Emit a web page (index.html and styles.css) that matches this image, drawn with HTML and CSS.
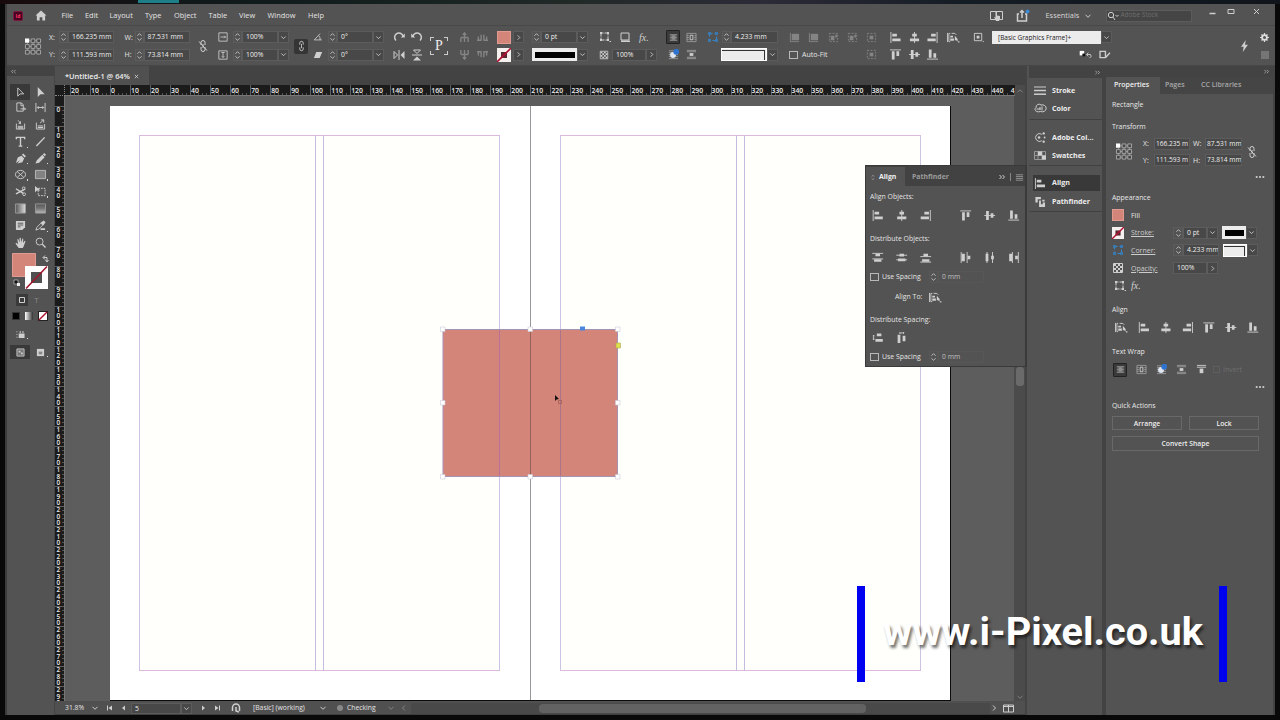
FILE: index.html
```html
<!DOCTYPE html>
<html lang="en">
<head>
<meta charset="utf-8">
<title>Untitled-1</title>
<link rel="stylesheet" href="styles.css">
</head>
<body>
<svg class="defs" width="0" height="0" aria-hidden="true">
  <symbol id="spin" viewBox="0 0 8 12"><path d="M1.500 4.500 4 2l2.500 2.500M1.500 7.500 4 10l2.500-2.500" class="ln"/></symbol>
  <symbol id="down" viewBox="0 0 8 8"><path d="M1.500 2.800 4 5.300l2.500-2.500" class="ln"/></symbol>
  <symbol id="up" viewBox="0 0 8 8"><path d="M1.500 5.300 4 2.800l2.500 2.500" class="ln"/></symbol>
  <symbol id="right" viewBox="0 0 8 8"><path d="M3 1.500 5.500 4 3 6.500" class="ln"/></symbol>
  <symbol id="left" viewBox="0 0 8 8"><path d="M5 1.500 2.500 4 5 6.500" class="ln"/></symbol>
  <symbol id="collapse" viewBox="0 0 8 6"><path d="M3.500 1 1.500 3l2 2M6.500 1l-2 2 2 2" class="ln"/></symbol>
  <symbol id="expand" viewBox="0 0 8 6"><path d="M1.500 1l2 2-2 2M4.500 1l2 2-2 2" class="ln"/></symbol>
  <symbol id="ref" viewBox="0 0 18 18"><path d="M3 3h12v12H3zM9 3v12M3 9h12" class="ln dim"/><g class="hole"><path d="M7 1h4v4H7zM13 1h4v4h-4zM1 7h4v4H1zM7 7h4v4H7zM13 7h4v4h-4zM1 13h4v4H1zM7 13h4v4H7zM13 13h4v4h-4z"/></g><path d="M.5.500H5v4.500H.500z" fill="#fff"/></symbol>
  <symbol id="chain" viewBox="0 0 10 14"><path d="M3 5.500V3.500a2 2 0 0 1 4 0v2M3 8.500v2a2 2 0 0 0 4 0v-2M5 4.500v5" class="ln"/></symbol>
  <symbol id="unchain" viewBox="0 0 10 14"><path d="M3 6V3.500a2 2 0 0 1 4 0V6M3 8v2.500a2 2 0 0 0 4 0V8M1 2.500l8 9M5 5v4" class="ln"/></symbol>
  <symbol id="scx" viewBox="0 0 12 12"><path d="M1 1h10v10H1zM3 6h6M7.500 4.500 9 6 7.500 7.500" class="ln"/></symbol>
  <symbol id="scy" viewBox="0 0 12 12"><path d="M1 1h10v10H1zM6 3v6M4.500 7.500 6 9l1.500-1.500M4 3h4" class="ln"/></symbol>
  <symbol id="angle" viewBox="0 0 12 12"><path d="M8.500 2 1.500 9.500h9M7 4.500q2 2 1.500 5" class="ln"/></symbol>
  <symbol id="shear" viewBox="0 0 12 12"><path d="M4 2.500h7l-3 7H1z" class="fl"/></symbol>
  <symbol id="rotr" viewBox="0 0 12 12"><path d="M3 9.500A4.300 4.300 0 1 1 10 5" class="ln th"/><path d="M11.800 2.500v4h-4z" class="fl"/></symbol>
  <symbol id="rotl" viewBox="0 0 12 12"><path d="M9 9.500A4.300 4.300 0 1 0 2 5" class="ln th"/><path d="M.2 2.500v4h4z" class="fl"/></symbol>
  <symbol id="fliph" viewBox="0 0 12 12"><path d="M6 1v10M1 2.500v7L4.500 6z" class="ln"/><path d="M11.500 2v8L7.500 6z" class="fl"/></symbol>
  <symbol id="flipv" viewBox="0 0 12 12"><path d="M1 6h10M2.500 1h7L6 4.500z" class="ln"/><path d="M2 11.500h8L6 7.500z" class="fl"/></symbol>
  <symbol id="tree" viewBox="0 0 12 12"><path d="M6 1v10M2 6v5M10 6v5M2 6h8M4.300 3 6 1l1.700 2" class="ln th"/></symbol>
  <symbol id="sibs" viewBox="0 0 12 12"><path d="M1.500 5v4M4.500 3v6M7.500 3v6M10.500 5v4M0 9h5M7 9h5" class="ln th"/></symbol>
  <symbol id="none" viewBox="0 0 14 14"><path d="M0 0h14v14H0z" fill="#f4f0ee"/><path d="M4 4h6v6H4z" fill="#5a2a30"/><path d="M0 14 14 0" stroke="#b01030" stroke-width="1.600"/></symbol>
  <symbol id="frame" viewBox="0 0 12 12"><path d="M2 2h7v7H2z" class="ln" stroke-dasharray="2.500 1"/><path d="M1 1h2v2H1zM8 1h2v2H8zM1 8h2v2H1zM8 8h2v2H8zM10.500 10h1.500v1h-1.500z" class="fl"/></symbol>
  <symbol id="shadow" viewBox="0 0 12 12"><path d="M2 2h8v7H2z" class="ln"/><path d="M2 9.500h9v1.500H2z" class="fl"/></symbol>
  <symbol id="checker" viewBox="0 0 12 12"><path d="M1.500 1.500h9v9h-9z" class="ln"/><path d="M2 2h2v2H2zM6 2h2v2H6zM4 4h2v2H4zM8 4h2v2H8zM2 6h2v2H2zM6 6h2v2H6zM4 8h2v2H4zM8 8h2v2H8z" class="fl"/></symbol>
  <symbol id="wrap0" viewBox="0 0 12 12"><path d="M1 2h10M1 4h10M1 6h10M1 8h10M1 10h10" class="ln dim"/><path d="M3.500 3h5v6h-5z" fill="#8c8c8c"/></symbol>
  <symbol id="wrap1" viewBox="0 0 12 12"><path d="M1 1.500h10v9H1z" fill="none" stroke="#989898"/><path d="M1 4h2M9 4h2M1 6h2M9 6h2M1 8h2M9 8h2" class="ln dim"/><path d="M4.500 3.500h3v5h-3z" class="ln"/></symbol>
  <symbol id="wrap2" viewBox="0 0 12 12"><path d="M1 2h10M1 4h10M1 6h10M1 8h10M1 10.500h10" class="ln dim"/><circle cx="5.500" cy="6.500" r="3.200" fill="#dfe6f2"/><circle cx="9" cy="3" r="3.200" fill="#2f73d0"/></symbol>
  <symbol id="wrap3" viewBox="0 0 12 12"><path d="M1 1.500h10M1 10.500h10M1 3h10M1 9h10" class="ln dim"/><path d="M4 4.500h4v3H4z" class="fl"/></symbol>
  <symbol id="wrap4" viewBox="0 0 12 12"><path d="M1 1.500h10M1 3.500h10" class="ln"/><path d="M4 5h4v5H4z" class="fl"/></symbol>
  <symbol id="corner" viewBox="0 0 12 12"><path d="M2.500 2.500h7v7h-7z" fill="none" stroke="#3a86c8" stroke-dasharray="3 2"/><path d="M1 1h3v3H1zM8 1h3v3H8zM1 8h3v3H1zM8 8h3v3H8z" fill="#3a78b0"/></symbol>
  <symbol id="fit1" viewBox="0 0 12 12"><path d="M1.500 1v10M1.500 10.500H11" class="ln"/><path d="M3 2h8v7H3z" class="fl"/></symbol>
  <symbol id="fit2" viewBox="0 0 12 12"><path d="M1.500 1.500h9v9h-9z" class="ln" stroke-dasharray="2 1.500"/><path d="M3 4h4v5H3zM8 3h2v3H8z" class="fl"/></symbol>
  <symbol id="fit3" viewBox="0 0 12 12"><path d="M1.500 1.500h9v9h-9z" class="ln" stroke-dasharray="2 1.500"/><path d="M4 4h4v4H4z" class="fl"/></symbol>
  <symbol id="aL" viewBox="0 0 12 12"><path d="M1 0v12" class="ln"/><path d="M2.500 2h5v3h-5zM2.500 7h9v3h-9z" class="fl"/></symbol>
  <symbol id="aC" viewBox="0 0 12 12"><path d="M6 0v12" class="ln"/><path d="M3.500 2h5v3h-5zM1 7h10v3H1z" class="fl"/></symbol>
  <symbol id="aR" viewBox="0 0 12 12"><path d="M11 0v12" class="ln"/><path d="M4.500 2h5v3h-5zM.5 7h9v3h-9z" class="fl"/></symbol>
  <symbol id="aT" viewBox="0 0 12 12"><path d="M0 1h12" class="ln"/><path d="M2 2.500h3v9H2zM7 2.500h3v5H7z" class="fl"/></symbol>
  <symbol id="aM" viewBox="0 0 12 12"><path d="M0 6h12" class="ln"/><path d="M2 1h3v10H2zM7 3.500h3v5H7z" class="fl"/></symbol>
  <symbol id="aB" viewBox="0 0 12 12"><path d="M0 11h12" class="ln"/><path d="M2 .5h3v9H2zM7 4.500h3v5H7z" class="fl"/></symbol>
  <symbol id="dT" viewBox="0 0 12 12"><path d="M0 1.500h12M0 7.500h12" class="ln"/><path d="M3.500 2h5v2.500h-5zM2 8h8v2.500H2z" class="fl"/></symbol>
  <symbol id="dM" viewBox="0 0 12 12"><path d="M0 3.500h12M0 8.500h12" class="ln"/><path d="M3.500 2h5v3h-5zM2 7h8v3H2z" class="fl"/></symbol>
  <symbol id="dB" viewBox="0 0 12 12"><path d="M0 5h12M0 11h12" class="ln"/><path d="M3.500 2h5v2.500h-5zM2 8h8v2.500H2z" class="fl"/></symbol>
  <symbol id="dL" viewBox="0 0 12 12"><path d="M1 0v12M7.500 0v12" class="ln"/><path d="M1.500 2h3.500v8H1.500zM8 4h3v4H8z" class="fl"/></symbol>
  <symbol id="dC" viewBox="0 0 12 12"><path d="M3 0v12M9 0v12" class="ln"/><path d="M1.500 2h3v8h-3zM7.500 4h3v4h-3z" class="fl"/></symbol>
  <symbol id="dR" viewBox="0 0 12 12"><path d="M4.500 0v12M11 0v12" class="ln"/><path d="M1 2h3.500v8H1zM7.500 4h3v4h-3z" class="fl"/></symbol>
  <symbol id="sV" viewBox="0 0 12 12"><path d="M1.500 3.500v5M.5 4.500l1-1 1 1M.5 7.500l1 1 1-1" class="ln"/><path d="M5 1.500h5v3H5zM3.500 7.500h8v3h-8z" class="fl"/></symbol>
  <symbol id="sH" viewBox="0 0 12 12"><path d="M3.500 1h5M4.500 0l-1 1 1 1M7.500 0l1 1-1 1" class="ln"/><path d="M1.500 3h3v9h-3zM7 4h3v6H7z" class="fl"/></symbol>
  <symbol id="aTo" viewBox="0 0 14 12"><path d="M1 1v10M4 1.500H2.500v9H4M5.500 1.500H9l1.500 1.500" class="ln"/><path d="M4 4h3v2H4zM4 7h4v2.500H4zM9 4l3 3.500v3L10.500 9H9zM12.500 10H14v1.500h-1.500z" class="fl"/></symbol>
  <symbol id="dots" viewBox="0 0 12 4"><circle cx="2" cy="2" r="1.300" class="fl"/><circle cx="6" cy="2" r="1.300" class="fl"/><circle cx="10" cy="2" r="1.300" class="fl"/></symbol>
  <symbol id="menu" viewBox="0 0 10 10"><path d="M1 2h8M1 4h8M1 6h8M1 8h8" class="ln dim"/></symbol>
</svg>

<div class="backdrop"><i class="teal"></i></div>
<div class="app">
  <header class="menubar">
    <span class="logo">Id</span>
    <svg class="home" viewBox="0 0 12 12"><path d="M6 .5 0 6h1.500v5.500h3V8h3v3.500h3V6H12z" class="fl"/></svg>
    <nav class="menus"><span>File</span><span>Edit</span><span>Layout</span><span>Type</span><span>Object</span><span>Table</span><span>View</span><span>Window</span><span>Help</span></nav>
    <svg class="touch" viewBox="0 0 13 11"><path d="M.5 1.500h12v8H.500z" class="ln"/><path d="M5.500 2 7 1.500v4l3 .5v3l-1 2H6L4 7l1.500.5z" class="fl"/></svg>
    <svg class="share" viewBox="0 0 14 13"><path d="M3 5H1.500v7h9V5H9M6 9V2M4 3.500l2-2 2 2" class="ln th"/><circle cx="11.500" cy="2.500" r="2" fill="#3a8ad8"/></svg>
    <span class="workspace">Essentials</span>
    <svg class="i8"><use href="#down"/></svg>
    <span class="search"><svg viewBox="0 0 12 10"><circle cx="4" cy="4" r="2.700" class="ln"/><path d="M6 6l2 3M8.500 4l1.500 1.500L11.500 4" class="ln"/></svg>Adobe Stock</span>
    <svg class="win" viewBox="0 0 52 10"><path d="M.5 6.500h6" class="ln th"/><path d="M19 2.500h6v4h-6zM45 2l5 5M50 2l-5 5" class="ln"/></svg>
  </header>

  <section class="control">
    <div class="g c01"><svg class="ref"><use href="#ref"/></svg></div>
    <div class="g rows lab"><div><b>X:</b><i class="sp"><svg><use href="#spin"/></svg></i><em class="f">166.235 mm</em></div><div><b>Y:</b><i class="sp"><svg><use href="#spin"/></svg></i><em class="f">111.593 mm</em></div></div>
    <div class="g rows lab"><div><b>W:</b><i class="sp"><svg><use href="#spin"/></svg></i><em class="f">87.531 mm</em></div><div><b>H:</b><i class="sp"><svg><use href="#spin"/></svg></i><em class="f">73.814 mm</em></div></div>
    <div class="g"><svg class="chain"><use href="#unchain"/></svg></div>
    <div class="g rows num"><div><svg class="i10"><use href="#scx"/></svg><i class="sp"><svg><use href="#spin"/></svg></i><em class="f">100%</em><i class="ch"><svg><use href="#down"/></svg></i></div><div><svg class="i10"><use href="#scy"/></svg><i class="sp"><svg><use href="#spin"/></svg></i><em class="f">100%</em><i class="ch"><svg><use href="#down"/></svg></i></div></div>
    <div class="g"><span class="linked"><svg><use href="#chain"/></svg></span></div>
    <div class="g rows num"><div><svg class="i10"><use href="#angle"/></svg><i class="sp"><svg><use href="#spin"/></svg></i><em class="f">0°</em><i class="ch"><svg><use href="#down"/></svg></i></div><div><svg class="i10"><use href="#shear"/></svg><i class="sp"><svg><use href="#spin"/></svg></i><em class="f">0°</em><i class="ch"><svg><use href="#down"/></svg></i></div></div>
    <div class="g rows gap6"><div><svg class="i12"><use href="#rotr"/></svg><svg class="i12"><use href="#rotl"/></svg></div><div><svg class="i12"><use href="#fliph"/></svg><svg class="i12"><use href="#flipv"/></svg></div></div>
    <div class="g"><span class="pbox">P</span></div>
    <div class="g rows gap7 faded"><div><svg class="i11"><use href="#tree"/></svg><svg class="i11"><use href="#sibs"/></svg></div><div><svg class="i11 flip"><use href="#tree"/></svg><svg class="i11 flip"><use href="#sibs"/></svg></div></div>
    <div class="g rows sw"><div><i class="swatch"></i><i class="ch"><svg><use href="#right"/></svg></i></div><div><svg class="i14"><use href="#none"/></svg><i class="ch"><svg><use href="#right"/></svg></i></div></div>
    <div class="g rows"><div><i class="sp"><svg><use href="#spin"/></svg></i><em class="f w35">0 pt</em><i class="ch"><svg><use href="#down"/></svg></i></div><div><i class="strokebox"></i><i class="ch"><svg><use href="#down"/></svg></i></div></div>
    <div class="g rows fxg"><div><svg class="i12"><use href="#frame"/></svg><svg class="i12"><use href="#shadow"/></svg><span class="fx">fx.</span></div><div class="op"><svg class="i10"><use href="#checker"/></svg><em class="f w34">100%</em><i class="ch"><svg><use href="#right"/></svg></i></div></div>
    <div class="g rows gap6"><div><i class="on"><svg><use href="#wrap0"/></svg></i><svg class="i11"><use href="#wrap1"/></svg></div><div><i class="off"><svg><use href="#wrap2"/></svg></i><svg class="i11"><use href="#wrap3"/></svg></div></div>
    <div class="g rows crn"><div><svg class="i12"><use href="#corner"/></svg><i class="sp"><svg><use href="#spin"/></svg></i><em class="f w46">4.233 mm</em></div><div class="r2"><i class="cornerbox"></i><i class="ch"><svg><use href="#down"/></svg></i></div></div>
    <div class="g rows fit"><div class="faded five"><svg class="i11"><use href="#fit1"/></svg><svg class="i11"><use href="#fit1"/></svg><svg class="i11"><use href="#fit2"/></svg><svg class="i11"><use href="#fit2"/></svg><svg class="i11"><use href="#fit3"/></svg></div><div><i class="cb"></i><span class="af">Auto-Fit</span><svg class="i11 faded"><use href="#fit3"/></svg></div></div>
    <div class="g rows al"><div><svg class="i11"><use href="#aL"/></svg><svg class="i11"><use href="#aC"/></svg><svg class="i11"><use href="#aR"/></svg><svg class="ato"><use href="#aTo"/></svg></div><div><svg class="i11"><use href="#aT"/></svg><svg class="i11"><use href="#aM"/></svg><svg class="i11"><use href="#aB"/></svg></div></div>
    <div class="g rows"><div><svg class="i11" viewBox="0 0 12 12"><path d="M1.500 1.500h8v8h-8z" class="ln"/><path d="M4 4h3v3H4zM10.500 10H12v1h-1.500z" class="fl"/></svg></div><div></div></div>
    <div class="g rows"><div><span class="style">[Basic Graphics Frame]+</span><i class="ch"><svg><use href="#down"/></svg></i></div><div class="undo"><svg viewBox="0 0 14 10"><path d="M0 1h5v5H0z" fill="#fff"/><path d="M3 4h3v3H3z" fill="#111"/><path d="M8 5h4q2 2-1 4M9.500 3 7.500 5l2 2" class="ln"/></svg><svg viewBox="0 0 14 10"><path d="M1.500 1.500h6v7h-6zM8 8l4.500-5" class="ln th"/></svg></div></div>
    <div class="g"><svg class="bolt" viewBox="0 0 10 14"><path d="M6.500 0 1 8h3l-1 6 6-8.500H5.500z" class="fl"/></svg></div>
    <div class="g rows"><div><svg class="i9" viewBox="0 0 12 12"><path d="M6 0v12M0 6h12M2 2l8 8M10 2l-8 8" stroke="#ddd" stroke-width="1.600"/><circle cx="6" cy="6" r="3.200" fill="#535353" stroke="#ddd" stroke-width="2.400"/></svg></div><div><svg class="i10"><use href="#menu"/></svg></div></div>
  </section>

  <main class="work">
    <aside class="toolcol">
      <div class="strip"><svg><use href="#collapse"/></svg></div>
      <div class="tools">
        <i class="sel"><svg viewBox="0 0 12 12"><path d="M3 1v9l2.500-2.500H9.500z" class="ln"/></svg></i><i><svg viewBox="0 0 12 12"><path d="M3 0v11l3-3h4.500z" class="fl"/></svg></i>
        <i><svg viewBox="0 0 12 12"><path d="M2 1h5l2 2v7H2zM6.500 1v3H9M6 7.500h5.500M10 6l1.500 1.500L10 9" class="ln"/></svg></i><i><svg viewBox="0 0 12 12"><path d="M1 1v10M11 1v10M2.500 6h7M4 4.500 2.500 6 4 7.500M8 4.500 9.500 6 8 7.500" class="ln"/></svg></i>
        <i><svg viewBox="0 0 12 12"><path d="M1.500 5v6h9V5M3 8h6M3.500 1.500 6 5M6 2.500V5H4" class="ln"/><path d="M3 9h6v1.500H3z" class="fl"/></svg></i><i><svg viewBox="0 0 12 12"><path d="M1.500 4v7h9V5.500M3 7.500h6M5.500 4.500l4-3.500M6.500 1h3v3" class="ln"/><path d="M3 8.500h6V10H3z" class="fl"/></svg></i>
        <i class="more"><svg viewBox="0 0 12 12"><path d="M1.500 3.500v-2h9v2M6 1.500v9.500M4 11h4" class="ln th"/></svg></i><i><svg viewBox="0 0 12 12"><path d="M1.500 11 10.500 1.500" class="ln th"/></svg></i>
        <i class="more"><svg viewBox="0 0 12 12"><path d="M1 11 3 5l4-2 3 3-2 4-5.500 1.500L5.500 8zM7.500 2l1.500-1.500 3 3L10.500 5z" class="fl"/></svg></i><i class="more"><svg viewBox="0 0 12 12"><path d="M.5 11.500 2 8l6-6 2.500 2.500-6 6zM8.500 1.500 10 0l2 2-1.200 1.500z" class="fl"/></svg></i>
        <i class="more"><svg viewBox="0 0 12 12"><ellipse cx="6" cy="6" rx="5.500" ry="4.500" class="ln"/><path d="M2.500 3l7 6M9.500 3l-7 6" class="ln"/></svg></i><i class="more"><svg viewBox="0 0 12 12"><path d="M.5 1.500h11v9H.500z" fill="#828282" stroke="#bbb"/></svg></i>
        <i><svg viewBox="0 0 12 12"><path d="M1 3l8 5M1 8.500l10-5" class="ln th"/><circle cx="10" cy="9" r="1.500" class="ln"/><circle cx="9.500" cy="2.500" r="1.500" class="ln"/></svg></i><i class="more"><svg viewBox="0 0 12 12"><path d="M3.500 2.500H11v8H3.500z" class="ln" stroke-dasharray="2 1"/><path d="M0 0v7l2-2h4z" class="fl"/></svg></i>
        <i><svg viewBox="0 0 12 12"><path d="M.5 1h11v10H.500z" fill="url(#gh)" stroke="#999"/></svg></i><i><svg viewBox="0 0 12 12"><path d="M.5 1h11v10H.500z" fill="url(#gv)" stroke="#999"/></svg></i>
        <i><svg viewBox="0 0 12 12"><path d="M1 1h10v7l-3 3H1z" class="fl"/><path d="M3 3.500h6M3 5.500h6M3 7.500h3" stroke="#535353"/></svg></i><i class="more"><svg viewBox="0 0 12 12"><path d="M1 11 2 8l4.500-4.500 2 2L4 10z" class="ln"/><path d="M6 3l3 3 2.500-3.500L9.500.5zM6 9h5v2H6z" class="fl"/></svg></i>
        <i><svg viewBox="0 0 12 12"><path d="M4 12 .5 7l1-.8L3.500 8 2.500 2.500l1-.2L5 6 5 .8h1.200L7 6 8 1.500l1 .3L8.800 6.500l1.700-2.500 1 .5L9.500 10 8.500 12z" class="fl"/></svg></i><i><svg viewBox="0 0 12 12"><circle cx="5" cy="5" r="3.800" class="ln"/><path d="M8 8l3.500 3.500" class="ln th"/></svg></i>
      </div>
      <svg class="fillstroke" viewBox="0 0 44 38">
        <defs><linearGradient id="gh"><stop offset="0" stop-color="#555"/><stop offset="1" stop-color="#ddd"/></linearGradient><linearGradient id="gv" x2="0" y2="1"><stop offset="0" stop-color="#555"/><stop offset=".5" stop-color="#777"/><stop offset="1" stop-color="#bbb"/></linearGradient></defs>
        <path d="M4.500 2.500h23v23h-23z" fill="#d4857a" stroke="#df9c92"/>
        <path d="M17 15h23v23H17z" fill="#fff"/><path d="M23 21h11v11H23z" fill="#505050"/><path d="M18 37.500 39 15.500" stroke="#a01830" stroke-width="1.600"/>
        <path d="M35.500 6.500h3.500v4M37 4.500l-2 2 2 2M37.500 9l1.500 2 1.500-2" class="ln"/>
        <path d="M6 29h4v4H6z" fill="#111" stroke="#ddd" stroke-width=".6"/><path d="M9 32h3v3H9z" fill="#eee"/>
      </svg>
      <div class="pair p1"><i class="dark"><svg viewBox="0 0 8 8"><path d="M1.500 1.500h5v5h-5z" class="ln"/></svg></i><i class="tt">T</i></div>
      <div class="trio"><i class="blk"></i><i class="grd"></i><svg viewBox="0 0 10 10"><path d="M0 0h10v10H0z" fill="#222"/><path d="M1 1h8v8H1z" fill="#fff"/><path d="M1 9 9 1" stroke="#b01030" stroke-width="1.400"/></svg></div>
      <div class="pair p2"><i class="more"><svg viewBox="0 0 10 10"><path d="M0 2h2M0 5h2M0 8h2" class="ln dim"/><path d="M3 4h6.500v5H3zM4 1.500h1.500v1.500H4zM7 1.500h1.500v1.500H7z" class="fl"/></svg></i></div>
      <div class="pair p3"><i class="sel"><svg viewBox="0 0 10 10"><path d="M1 1h8v8H1z" fill="#777" stroke="#c4c4c4"/><path d="M3 3h2v2H3zM5.500 5h2v2h-2z" class="fl"/></svg></i><i class="more"><svg viewBox="0 0 10 10"><path d="M1 1h8v8H1z" class="fl"/><path d="M3 4h4v3H3z" fill="#888"/></svg></i></div>
    </aside>

    <section class="doc">
      <div class="tabs"><span class="tab">*Untitled-1 @ 64% <svg viewBox="0 0 6 6"><path d="M1 1l4 4M5 1 1 5" class="ln"/></svg></span></div>
      <div class="hr"><i class="origin"></i><div class="hticks" id="hticks"></div><i class="cap"><svg class="i8 faded"><use href="#up"/></svg></i></div>
      <div class="mid">
        <div class="vticks" id="vticks"></div>
        <div class="canvas">
          <div class="spread">
            <svg viewBox="110 106 841 595" width="841" height="595">
              <path d="M139.500 135.500h360v535h-360zM560.500 135.500h360v535h-360z" fill="#fffffb" stroke="#cdc3e4"/>
              <path d="M139 135.500h361M560 135.500h361M139 670.500h361M560 670.500h361" stroke="#dcb9dc"/>
              <path d="M315.500 135v536M323.500 135v536M736.500 135v536M744.500 135v536" stroke="#c6bbe0"/>
              <path d="M530.500 106v594" stroke="#98989c"/>
              <path d="M443 329.500h174.500v147H443z" fill="#d4857a" stroke="#a593b4"/>
              <path d="M499.500 330v146" stroke="#b8709a"/><path d="M560.500 330v146" stroke="#ac7488"/>
              <path d="M530.500 330v146" stroke="#96605c"/>
              <path d="M110 700.500h841M950.500 106v595" stroke="#0c0c0c"/>
              <g fill="#fff" stroke="#c9c9da" stroke-width=".6"><path d="M440.500 327h4.500v4.500h-4.500zM528 327h4.500v4.500H528zM615.500 327h4.500v4.500h-4.500zM440.500 400.500h4.500v4.500h-4.500zM615.500 400.500h4.500v4.500h-4.500zM440.500 474.500h4.500v4.500h-4.500zM528 474.500h4.500v4.500H528zM615.500 474.500h4.500v4.500h-4.500z"/></g>
              <path d="M580 326.500h5v4h-5z" fill="#4a86dc"/><path d="M616 343h4.500v5H616z" fill="#dfe04c" stroke="#a8a850" stroke-width=".6"/>
              <path d="M555 395v6l1.500-1.500 2.500-.5z" fill="#111"/><path d="M558.500 400.500h3v3h-3z" fill="none" stroke="#a05c54" stroke-width=".8"/>
            </svg>
          </div>
        </div>
        <div class="vscroll"><i></i><svg class="i8 dn faded"><use href="#down"/></svg></div>
      </div>
      <div class="status">
        <span class="zoom">31.8%</span><svg class="i8"><use href="#down"/></svg>
        <svg class="pg" viewBox="0 0 22 8"><path d="M1.500 1.500v5" class="ln"/><path d="M6 1.500v5L2.500 4zM19 1.500v5L16 4z" class="fl"/></svg>
        <em class="f">5</em><i class="ch"><svg><use href="#down"/></svg></i>
        <svg class="pg2" viewBox="0 0 22 8"><path d="M3 1.500v5L6 4zM16 1.500v5L19.500 4z" class="fl"/><path d="M20.500 1.500v5" class="ln"/></svg>
        <svg class="hd" viewBox="0 0 12 10"><path d="M1.500 8V4.500a3.500 3.500 0 0 1 7 0V8M5 4v4l3 1" class="ln th"/></svg>
        <span class="prof">[Basic] (working)</span><svg class="i8"><use href="#down"/></svg>
        <i class="dot"></i><span class="chk">Checking</span><svg class="i8 faded"><use href="#down"/></svg><svg class="i8 faded lf"><use href="#left"/></svg>
        <span class="track"><i></i></span><svg class="i8"><use href="#right"/></svg>
        <svg class="split" viewBox="0 0 11 9"><path d="M.5 1h10v7H.500zM5.500 1v7M.5 2.500h10" class="ln"/></svg>
      </div>
    </section>

    <aside class="dock">
      <div class="strip"><svg><use href="#expand"/></svg></div>
      <div class="dlist">
        <div class="set"><p><svg viewBox="0 0 12 10"><path d="M0 1.500h12" class="ln"/><path d="M0 5h12" class="ln th"/><path d="M0 8.700h12" class="ln th"/></svg>Stroke</p><p><svg viewBox="0 0 12 10"><path d="M2 4a3 3 0 0 1 5-2.500A4 3.500 0 1 1 6.500 8C2 9.500-.5 6 2 4z" class="ln"/><path d="M2.500 5.500h4M8 3v4M6 3.500v3" class="ln"/></svg>Color</p></div>
        <div class="set"><p><svg viewBox="0 0 12 12"><path d="M8 2.500A4.300 4.300 0 1 0 8 9.500" class="ln"/><circle cx="5" cy="6" r="1.400" class="fl"/><circle cx="10" cy="1.500" r="1.300" class="fl"/><circle cx="11" cy="6" r="1" class="fl"/><circle cx="10" cy="10.500" r="1.300" class="fl"/></svg>Adobe Col...</p><p><svg viewBox="0 0 12 10"><path d="M.5 1h11v8H.500zM.5 5h11M4 1v8M8 1v8" class="ln dim"/><path d="M4 1h4v4H4zM8 5h4v4H8z" class="fl"/></svg>Swatches</p></div>
        <div class="set"><p class="act"><svg><use href="#aL"/></svg>Align</p><p><svg viewBox="0 0 12 12"><path d="M1 1h6v2.500H3.500V7H1zM5 5h2v4h2V7h2.500v5H5zM8.500 4H11v2H8.500z" class="fl"/></svg>Pathfinder</p></div>
      </div>
    </aside>

    <aside class="props">
      <div class="strip"><svg><use href="#expand"/></svg></div>
      <div class="ptabs"><span class="cur">Properties</span><span>Pages</span><span>CC Libraries</span></div>
      <div class="pbody">
        <h4 class="h1">Rectangle</h4>
        <h4 class="h2">Transform</h4>
        <div class="xf"><svg class="ref"><use href="#ref"/></svg><div class="xfg"><b>X:</b><em class="f">166.235 m</em><b>W:</b><em class="f">87.531 mm</em><b>Y:</b><em class="f">111.593 m</em><b>H:</b><em class="f">73.814 mm</em></div><svg class="chain"><use href="#unchain"/></svg></div>
        <div class="dotsrow"><svg><use href="#dots"/></svg></div>
        <h4 class="h3">Appearance</h4>
        <div class="ar"><i class="swatch"></i><span>Fill</span></div>
        <div class="ar"><svg class="i12"><use href="#none"/></svg><u>Stroke:</u><i class="sp"><svg><use href="#spin"/></svg></i><em class="f w24">0 pt</em><i class="ch"><svg><use href="#down"/></svg></i><i class="strokebox"></i><i class="ch"><svg><use href="#down"/></svg></i></div>
        <div class="ar"><svg class="i12"><use href="#corner"/></svg><u>Corner:</u><i class="sp"><svg><use href="#spin"/></svg></i><em class="f w35">4.233 mm</em><i class="cornerbox"></i><i class="ch"><svg><use href="#down"/></svg></i></div>
        <div class="ar"><svg class="i12"><use href="#checker"/></svg><u>Opacity:</u><em class="f w34">100%</em><i class="ch"><svg><use href="#right"/></svg></i></div>
        <div class="ar"><svg class="i12 frm"><use href="#frame"/></svg><span class="fx">fx.</span></div>
        <h4 class="h4">Align</h4>
        <div class="alr"><svg><use href="#aTo"/></svg><svg><use href="#aL"/></svg><svg><use href="#aC"/></svg><svg><use href="#aR"/></svg><svg><use href="#aT"/></svg><svg><use href="#aM"/></svg><svg><use href="#aB"/></svg></div>
        <h4 class="h5">Text Wrap</h4>
        <div class="twr"><i class="on"><svg><use href="#wrap0"/></svg></i><svg><use href="#wrap1"/></svg><svg><use href="#wrap2"/></svg><svg><use href="#wrap3"/></svg><svg><use href="#wrap4"/></svg><span><i></i>Invert</span></div>
        <div class="dotsrow d2"><svg><use href="#dots"/></svg></div>
        <h4 class="h6">Quick Actions</h4>
        <div class="qa"><button>Arrange</button><button>Lock</button><button class="wide">Convert Shape</button></div>
      </div>
    </aside>
  </main>

  <section class="panel">
    <div class="phead"><span class="cur"><svg viewBox="0 0 5 8"><path d="M1 3l1.500-2L4 3M1 5l1.500 2L4 5" class="ln dim"/></svg>Align</span><span>Pathfinder</span><svg class="ex"><use href="#expand"/></svg><i></i><svg class="mn"><use href="#menu"/></svg></div>
    <h5>Align Objects:</h5>
    <div class="six"><svg><use href="#aL"/></svg><svg><use href="#aC"/></svg><svg><use href="#aR"/></svg><svg><use href="#aT"/></svg><svg><use href="#aM"/></svg><svg><use href="#aB"/></svg></div>
    <h5>Distribute Objects:</h5>
    <div class="six s2"><svg><use href="#dT"/></svg><svg><use href="#dM"/></svg><svg><use href="#dB"/></svg><svg><use href="#dL"/></svg><svg><use href="#dC"/></svg><svg><use href="#dR"/></svg></div>
    <div class="us"><i class="cb"></i><span>Use Spacing</span><i class="sp"><svg><use href="#spin"/></svg></i><em class="f">0 mm</em></div>
    <div class="at"><span>Align To:</span><svg><use href="#aTo"/></svg></div>
    <h5 class="ds">Distribute Spacing:</h5>
    <div class="six s3"><svg><use href="#sV"/></svg><svg><use href="#sH"/></svg></div>
    <div class="us"><i class="cb"></i><span>Use Spacing</span><i class="sp"><svg><use href="#spin"/></svg></i><em class="f">0 mm</em></div>
  </section>
</div>
<div class="banner">www.i-Pixel.co.uk</div>
<script src="rulers.js"></script>
</body>
</html>
```
FILE: styles.css
```css
* { box-sizing: border-box; }
body { margin: 0; width: 1280px; height: 720px; overflow: hidden; position: relative; background: #090909; color: #e4e4e4; font: 7px/1 "Open Sans", "Noto Sans", sans-serif; }
i, em { font-style: normal; }
b { font-weight: 400; }
p, h4, h5 { margin: 0; }
h4, h5 { font-weight: 400; }
svg { display: block; flex: none; overflow: visible; }
.defs { position: absolute; }
.ln { fill: none; stroke: #cfcfcf; stroke-width: 1; }
.th { stroke-width: 1.5; }
.dim { stroke: #989898; }
.fl { fill: #cfcfcf; }
.hole path { fill: #474747; stroke: #a8a8a8; stroke-width: 1; }
.faded { opacity: .4; }
.flip { transform: scaleY(-1); }
.i8 { width: 8px; height: 8px; }
.i9 { width: 9px; height: 9px; }
.i10 { width: 10px; height: 10px; }
.i11 { width: 11px; height: 11px; }
.i12 { width: 12px; height: 12px; }
.i14 { width: 14px; height: 14px; }

.backdrop { height: 4px; padding-left: 138px; background: linear-gradient(90deg, #180a0c, #10181a 15%, #15201f 30%, #222a28 45%, #2c2b38 60%, #141c24 75%, #10151c); }
.teal { display: block; width: 41px; height: 3px; background: #1f7f88; }
.app { width: 1270px; height: 711px; margin-left: 5px; background: #535353; border-left: 2px solid #3c3c3c; position: relative; }

.menubar { height: 22px; padding-top: 2px; display: flex; align-items: center; border-bottom: 1px solid #484848; font-size: 7.400px; }
.logo { width: 10px; height: 10px; margin-left: 6px; background: #49021f; border: 1px solid #7a1840; border-radius: 2px; color: #ff3366; font-size: 5px; line-height: 8px; text-align: center; font-weight: 700; }
.home { width: 12px; height: 11px; margin-left: 12px; }
.menus { display: grid; grid-template-columns: 23.500px 24.500px 35.500px 29px 34.500px 30.500px 28.500px 40.500px 30px; margin-left: 14.500px; width: 276px; white-space: nowrap; }
.touch { width: 13px; height: 11px; margin-left: 652px; }
.share { width: 14px; height: 13px; margin-left: 13px; }
.workspace { margin-left: 16px; width: 38px; white-space: nowrap; color: #d6d6d6; }
.search { margin-left: 14px; width: 86px; height: 12px; background: #454545; border: 1px solid #5c5c5c; display: flex; align-items: center; gap: 2px; color: #6e6e6e; font-size: 6.500px; white-space: nowrap; }
.search svg { width: 12px; height: 10px; }
.win { width: 52px; height: 10px; margin: -8px 0 0 17px; }

.control { height: 40px; padding: 1px 0 0; display: grid; align-items: center; border-bottom: 1px solid #474747;
  grid-template-columns: 42px 75.500px 73.500px 20px 76px 19px 80px 37px 29px 38px 35px 67px 67px 40px 82px 101px 84px 18px 249px 20px 18px; }
.g { display: flex; align-items: center; white-space: nowrap; }
.c01 { padding-left: 17px; }
.ref { width: 18px; height: 17px; }
.rows { display: grid; grid-template-rows: 17.500px 17.500px; }
.rows > div { display: flex; align-items: center; }
.lab b { width: 10px; }
.sp { width: 9px; height: 12px; border: 1px solid #5c5c5c; display: flex; align-items: center; justify-content: center; }
.sp svg { width: 7px; height: 10px; }
.f { height: 12px; line-height: 10px; padding-left: 3px; background: #484848; border: 1px solid #5c5c5c; color: #eee; overflow: hidden; white-space: nowrap; width: 46px; font-size: 6.800px; }
.ch { width: 11px; height: 12px; background: #484848; border: 1px solid #5c5c5c; display: flex; align-items: center; justify-content: center; }
.ch svg { width: 7px; height: 7px; }
.chain { width: 10px; height: 14px; }
.num .sp { margin-left: 5px; }
.num .f { width: 36px; }
.linked { width: 14px; height: 15px; background: #353535; display: grid; place-items: center; border-radius: 2px; }
.linked svg { width: 9px; height: 12px; }
.gap6 > div { gap: 6px; }
.gap7 > div { gap: 7px; }
.pbox { width: 18px; height: 18px; font: 14px/18px "Liberation Serif", serif; text-align: center; color: #eee;
  background: linear-gradient(#ccc, #ccc) 0 0/4px 1px, linear-gradient(#ccc, #ccc) 0 0/1px 4px, linear-gradient(#ccc, #ccc) 100% 0/4px 1px, linear-gradient(#ccc, #ccc) 100% 0/1px 4px, linear-gradient(#ccc, #ccc) 0 100%/4px 1px, linear-gradient(#ccc, #ccc) 0 100%/1px 4px, linear-gradient(#ccc, #ccc) 100% 100%/4px 1px, linear-gradient(#ccc, #ccc) 100% 100%/1px 4px; background-repeat: no-repeat; }
.swatch { width: 14px; height: 13px; background: #d4857a; border: 1px solid #e09a90; }
.sw .ch { margin-left: 2px; }
.w24 { width: 24px; } .w34 { width: 34px; } .w35 { width: 36px; } .w46 { width: 47px; }
.strokebox { width: 45px; height: 13px; background: #000; border: solid #ececec; border-width: 4px 2px 3px 3px; }
.fxg > div { gap: 8px; }
.fxg > .op { gap: 0; }
.op .f { margin-left: 3px; }
.fx { font: italic 10px "Liberation Serif", serif; color: #d0d0d0; }
.on, .off { width: 14px; height: 14px; display: grid; place-items: center; border-radius: 1px; }
.on { background: #3a3a3a; border: 1px solid #222; }
.on svg { width: 9px; height: 9px; }
.off svg { width: 11px; height: 11px; }
.crn > div { padding-left: 1px; }
.crn .sp { margin-left: 3px; }
.crn > .r2 { padding-left: 15px; }
.cornerbox { width: 46px; height: 13px; background: #ececec; border: 1px solid #fff; box-shadow: inset -1px 1px 0 #ececec, inset -2px 2px 0 #333; }
.fit > div { padding-left: 1px; }
.fit .five { gap: 8.300px; }
.cb { width: 9px; height: 8px; border: 1px solid #b8b8b8; }
.af { margin-left: 4px; width: 64px; }
.al > div { gap: 7.500px; padding-left: 1px; }
.al .ato { width: 14px; height: 11px; }
.style { width: 109px; height: 13px; background: #ececec; color: #222; padding-left: 6px; line-height: 13px; font-size: 6.500px; margin-left: 1px; }
.undo { padding-left: 88px; gap: 5px; }
.undo svg { width: 14px; height: 9px; }
.bolt { width: 9px; height: 12px; }

.work { height: 649px; display: grid; grid-template-rows: 649px; grid-template-columns: 48px 972px 79px 169px; }
.strip { height: 12px; background: #434343; display: flex; align-items: center; }
.strip svg { width: 7px; height: 5px; opacity: .75; }
.toolcol { border-right: 1px solid #454545; overflow: hidden; }
.toolcol .strip { padding-left: 3px; height: 10px; }
.tools { margin: 8px 0 0 3px; display: grid; grid-template-columns: 20px 20px; grid-template-rows: 16px 15.500px 17px 17.500px 16px 16.500px 17px 17px 17.500px 16px; }
.tools i, .pair i { display: grid; place-items: center; position: relative; }
.tools svg { width: 11px; height: 11px; }
.sel { background: #393939; }
.more::after { content: ""; position: absolute; right: 2px; bottom: 2px; width: 1.500px; height: 1.500px; background: #ddd; }
.fillstroke { width: 44px; height: 38px; margin: 1px 0 0 1px; }
.pair { display: flex; margin-left: 3px; }
.p1 { margin-top: 5px; padding-left: 6px; }
.pair .dark { width: 12px; height: 12px; background: #3a3a3a; margin-right: 4px; }
.dark svg { width: 8px; height: 8px; }
.pair .tt { color: #888; width: 9px; font-size: 8px; }
.trio { display: flex; gap: 5px; align-items: center; margin: 4px 0 0 5px; height: 12px; }
.trio svg { width: 10px; height: 10px; }
.blk, .grd { width: 8px; height: 8px; background: #000; border: 1px solid #333; }
.grd { background: linear-gradient(90deg, #fff, #333); border: 0; }
.p2 { margin-top: 5px; } .p3 { margin-top: 4px; }
.p2 i, .p3 i { width: 20px; height: 14px; }
.p2 svg, .p3 svg { width: 9px; height: 9px; }

.doc { display: flex; flex-direction: column; border-right: 2px solid #444; min-height: 0; overflow: hidden; }
.tabs { height: 19px; background: #434343; }
.tab { display: flex; align-items: center; gap: 4px; width: 94px; height: 19px; padding: 2px 0 0 10px; background: #505050; color: #eee; font-weight: 600; font-size: 7.400px; white-space: nowrap; }
.tab svg { width: 5px; height: 5px; }
.hr { height: 11px; display: flex; background: #1b1b1b; }
.origin { width: 10px; border-right: 1px dotted #888; border-bottom: 1px dotted #888; }
.cap { width: 10px; background: #4b4b4b; display: grid; place-items: center; }
.hticks { flex: 1; display: flex; overflow: hidden; padding-left: 5px; border-bottom: 1px solid #777; }
.hticks span { flex: none; width: 20.030px; padding: 1.500px 0 0; border-left: 1px solid #606060; font-size: 6.800px; font-weight: 600; color: #eee; line-height: 7px;
  background: repeating-linear-gradient(90deg, transparent 0 3px, #555 3px 4px) 0 100%/100% 2px no-repeat; }
.hticks span:last-child { width: auto; border: 0; }
.mid { flex: 1; display: flex; min-height: 0; }
.vticks { width: 10px; background: #1b1b1b; overflow: hidden; padding-top: 10px; border-right: 1px solid #777; }
.vticks span { display: block; height: 20.030px; width: 9px; padding: 0 3px 0 1.500px; border-top: 1px solid #606060; font-size: 6.400px; font-weight: 600; line-height: 6.300px; color: #eee; word-break: break-all;
  background: repeating-linear-gradient(0deg, transparent 0 3px, #555 3px 4px) 100% 0/2px 100% no-repeat; }
.canvas { flex: 1; background: #5d5d5d; padding: 10px 0 0 45px; overflow: hidden; }
.spread { width: 841px; height: 595px; background: #fff; }
.vscroll { width: 11px; background: #4b4b4b; display: flex; flex-direction: column; align-items: center; padding-top: 271px; }
.vscroll i { width: 8px; height: 19px; background: #6a6a6a; border-radius: 3px; }
.vscroll .dn { margin-top: auto; }
.status { height: 14px; flex: none; display: flex; align-items: center; padding: 1px 0 0 10px; white-space: nowrap; font-size: 6.800px; background: #505050; border-bottom: 1px solid #3e3e3e; }
.zoom { width: 26px; }
.pg { width: 22px; height: 8px; margin: 0 3px 0 7px; }
.status .f { width: 50px; }
.status .f, .status .ch { height: 11px; line-height: 10px; }
.pg2 { width: 22px; height: 8px; margin-left: 7px; }
.hd { width: 12px; height: 10px; margin-left: 10px; }
.prof { margin-left: 10px; width: 66px; }
.dot { width: 6px; height: 6px; border-radius: 50%; background: #888; margin-left: 10px; }
.chk { margin-left: 4px; width: 40px; }
.lf { margin-left: 5px; }
.track { flex: 1; margin-left: 3px; height: 11px; background: #494949; padding: 1px 0 0 128px; }
.track i { display: block; width: 327px; height: 9px; background: #626262; border-radius: 4px; }
.split { width: 11px; height: 9px; margin: 0 11px 0 5px; }

.dock { border-right: 4px solid #434343; padding-left: 2px; }
.dock .strip { justify-content: flex-end; padding-right: 1px; }
.dlist { font-weight: 700; font-size: 7.100px; }
.set { border-bottom: 1px solid #414141; padding: 4px 2px 2px 4px; }
.set:first-child { padding-top: 3px; height: 42px; }
.set:nth-child(2) { height: 46px; padding-top: 8px; }
.set:nth-child(3) { height: 46px; padding-top: 9px; }
.set p { height: 18.500px; display: flex; align-items: center; gap: 6px; padding-left: 1px; white-space: nowrap; color: #ededed; }
.set .act { background: #393939; height: 16px; margin-bottom: 1px; }
.set svg { width: 12px; height: 11px; }

.props { border-right: 2px solid #434343; }
.props .strip { justify-content: flex-end; padding-right: 3px; height: 11px; }
.ptabs { height: 17px; background: #454545; display: flex; font-weight: 600; font-size: 7px; line-height: 15px; color: #a8a8a8; white-space: nowrap; }
.ptabs span { width: 36px; padding-left: 5px; }
.ptabs .cur { width: 54px; padding-left: 8px; background: #535353; color: #f0f0f0; }
.pbody { padding-left: 6px; }
h4 { height: 16px; line-height: 16px; font-size: 6.900px; white-space: nowrap; color: #e8e8e8; }
.h1 { margin-top: 3px; } .h2 { margin-top: 6.300px; } .h3 { margin-top: 4.500px; } .h4 { margin-top: 7.500px; } .h5 { margin-top: 7px; } .h6 { margin-top: 2px; }
.xf { height: 33px; display: flex; align-items: center; padding-left: 3px; }
.xfg { margin-left: 10px; width: 102px; display: grid; grid-template-columns: 8px 36px 9px 37px; column-gap: 3px; grid-template-rows: 16.500px 16.500px; align-items: center; }
.xfg .f { width: auto; padding-left: 1px; font-size: 6.600px; }
.xf .chain { margin-left: 2px; }
.dotsrow { height: 16px; margin-top: 1.700px; padding: 5px 0 0 143px; }
.dotsrow svg { width: 10px; height: 4px; }
.ar { height: 17.600px; display: flex; align-items: center; white-space: nowrap; }
.ar .swatch { width: 12px; height: 12px; }
.ar span { margin-left: 7px; }
.ar .frm { margin-left: 2px; }
.ar .frm + span { margin-left: 5px; }
.ar u { margin-left: 7px; width: 42px; color: #ccc; }
.ar .sp { width: 10px; }
.ar .strokebox, .ar .cornerbox { width: 24px; margin-left: 4px; }
.alr { height: 18px; margin-top: 1px; display: flex; align-items: center; gap: 10px; }
.alr svg { width: 11.800px; height: 11px; }
.alr svg:first-child { width: 14px; margin-left: 2px; }
.twr { height: 18px; margin-top: 1px; display: flex; align-items: center; gap: 9px; padding-left: 1px; }
.twr > svg { width: 11px; height: 11px; }
.twr span { display: flex; gap: 3px; align-items: center; color: #6e6e6e; margin-left: -3px; }
.twr span i { width: 7px; height: 7px; border: 1px solid #5e5e5e; }
.d2 { margin-top: 1px; }
.qa { display: grid; grid-template-columns: 70px 70px; gap: 6px 7px; margin-top: 2px; }
.qa button { height: 14.500px; padding: 0; background: #535353; border: 1px solid #696969; color: #eee; font: 600 6.800px "Open Sans", sans-serif; }
.qa .wide { grid-column: span 2; }

.panel { position: absolute; left: 858px; top: 161px; width: 162px; height: 202px; background: #535353; border: 1px solid #3a3a3a; border-right-width: 2px; padding-left: 4px; font-size: 6.900px; white-space: nowrap; }
.phead { height: 20px; margin-left: -4px; background: #424242; display: flex; align-items: center; font-weight: 700; color: #9c9c9c; padding-top: 2px; }
.phead span { padding-left: 7px; width: 82px; }
.phead .cur { width: 39px; height: 20px; background: #535353; color: #f0f0f0; display: flex; align-items: center; padding-left: 5px; gap: 4px; }
.phead .cur svg { width: 4px; height: 7px; }
.phead .ex { width: 8px; height: 6px; margin-left: 11px; }
.phead i { width: 1px; height: 8px; background: #888; margin: 0 4px; }
.phead .mn { width: 9px; height: 9px; }
h5 { height: 22px; line-height: 22px; font-size: 6.900px; }
.six { height: 20px; margin-left: 2px; display: grid; grid-template-columns: 24px 24px 40px 24px 24px 12px; align-items: center; padding-bottom: 5px; }
.six svg { width: 11.500px; height: 11px; }
.s2 { height: 18px; padding: 0 0 3px; }
.s3 { height: 19px; margin-top: -3px; padding: 0 0 3px; }
.us { height: 19px; display: flex; align-items: center; padding-bottom: 1px; }
.us span { margin-left: 3px; width: 47px; }
.us .sp, .us .f { border-color: #575757; background: #535353; color: #c0c0c0; }
.at { height: 21px; display: flex; align-items: center; padding: 0 0 1px 25px; }
.at span { width: 33px; }
.at svg { width: 14px; height: 11px; }
h5.ds { height: 24px; line-height: 23px; }

.banner { position: absolute; left: 857px; top: 586px; width: 370px; height: 96px; border: solid #0000f0; border-width: 0 8px; padding-left: 18px; font: 700 39.700px/92px Roboto, sans-serif; color: #fff; white-space: nowrap; text-shadow: 2px 3px 3px rgba(0,0,0,.55); }
```
FILE: rulers.js
```javascript
function fill(id, from, to) {
  const ruler = document.getElementById(id);
  for (let v = from; v <= to; v += 10) {
    const tick = document.createElement('span');
    tick.textContent = Math.abs(v);
    ruler.append(tick);
  }
  return ruler;
}

// The last horizontal label is the visible start of 450.
const end = document.createElement('span');
end.textContent = '4';
fill('hticks', -20, 440).append(end);
fill('vticks', 0, 290);
```
